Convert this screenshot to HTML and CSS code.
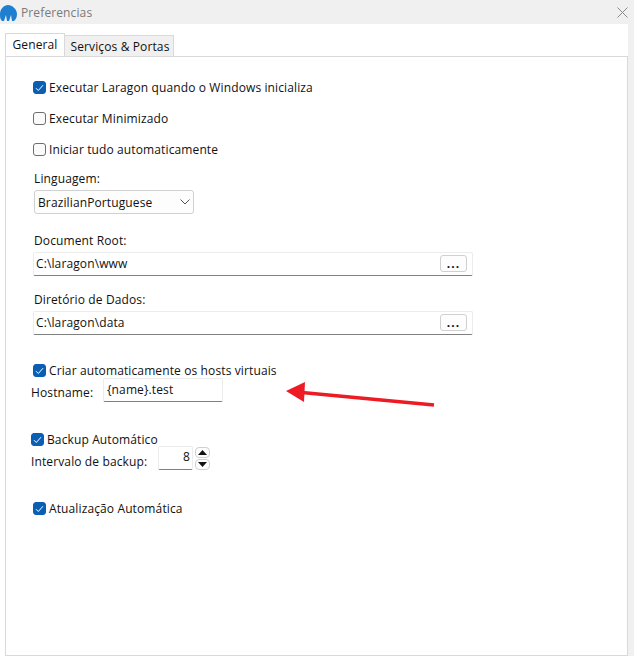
FILE: index.html
```html
<!DOCTYPE html>
<html lang="pt-BR">
<head>
  <meta charset="UTF-8" />
  <title>Preferencias</title>
  <link rel="stylesheet" href="styles.css">
</head>
<body>
  <div class="titlebar">
    <svg class="logo" width="17" height="18" viewBox="0 0 17 18">
      <path d="M8 1C12 1 17 5 17 10C17 13 16 15 14 17L12 17L11 11L9 17L7 17L6 11L4 17L2 17C0 15 0 13 0 10C0 5 4 1 8 1Z" fill="#1e7fd0"/>
    </svg>
    <span class="title">Preferencias</span>
    <svg class="close" width="11" height="11" viewBox="0 0 11 11">
      <path d="M0.5 0.5L10.5 10.5M10.5 0.5L0.5 10.5" stroke="#8a8a8a" stroke-width="1" fill="none"/>
    </svg>
  </div>

  <div class="window">
    <div class="tabs">
      <div class="tab active">General</div>
      <div class="tab">Serviços &amp; Portas</div>
    </div>

    <div class="panel">
      <!-- Startup options -->
      <label class="check first">
        <span class="box on"><svg width="9" height="8" viewBox="0 0 9 8"><path d="M1 4.2L3.3 6.5L8 1.2" stroke="#fff" stroke-width="1" fill="none"/></svg></span>
        Executar Laragon quando o Windows inicializa
      </label>
      <label class="check next">
        <span class="box"></span>
        Executar Minimizado
      </label>
      <label class="check next">
        <span class="box"></span>
        Iniciar tudo automaticamente
      </label>

      <div class="field-label lang-label">Linguagem:</div>
      <div class="select">
        <span>BrazilianPortuguese</span>
        <svg width="10" height="6" viewBox="0 0 10 6"><path d="M0.5 0.5L5 5L9.5 0.5" stroke="#555" stroke-width="1" fill="none"/></svg>
      </div>

      <div class="field-label root-label">Document Root:</div>
      <div class="path-input">
        <span>C:\laragon\www</span>
        <div class="dots">...</div>
      </div>

      <div class="field-label data-label">Diretório de Dados:</div>
      <div class="path-input">
        <span>C:\laragon\data</span>
        <div class="dots">...</div>
      </div>

      <!-- Virtual hosts -->
      <label class="check hosts">
        <span class="box on"><svg width="9" height="8" viewBox="0 0 9 8"><path d="M1 4.2L3.3 6.5L8 1.2" stroke="#fff" stroke-width="1" fill="none"/></svg></span>
        Criar automaticamente os hosts virtuais
      </label>
      <div class="host-row">
        <span class="host-label">Hostname:</span>
        <div class="host-input">{name}.test</div>
      </div>

      <!-- Backup -->
      <label class="check backup">
        <span class="box on"><svg width="9" height="8" viewBox="0 0 9 8"><path d="M1 4.2L3.3 6.5L8 1.2" stroke="#fff" stroke-width="1" fill="none"/></svg></span>
        Backup Automático
      </label>
      <div class="backup-row">
        <span class="backup-label">Intervalo de backup:</span>
        <div class="num-input">8</div>
        <div class="spin">
          <div class="spin-btn"><svg width="9" height="5" viewBox="0 0 9 5"><path d="M4.5 0L9 5L0 5Z" fill="#111"/></svg></div>
          <div class="spin-btn"><svg width="9" height="5" viewBox="0 0 9 5"><path d="M0 0L9 0L4.5 5Z" fill="#111"/></svg></div>
        </div>
      </div>

      <label class="check update">
        <span class="box on"><svg width="9" height="8" viewBox="0 0 9 8"><path d="M1 4.2L3.3 6.5L8 1.2" stroke="#fff" stroke-width="1" fill="none"/></svg></span>
        Atualização Automática
      </label>

      <!-- Annotation over the dialog -->
      <svg class="arrow" width="160" height="30" viewBox="0 0 160 30">
        <path d="M152 25L20 12.5" stroke="#ed1c24" stroke-width="3.5" fill="none"/>
        <path d="M4 11L23 2L22 22Z" fill="#ed1c24"/>
      </svg>
    </div>
  </div>
</body>
</html>
```

FILE: styles.css
```css
* {
  box-sizing: border-box;
}

body {
  margin: 0;
  background: #fff;
  font-family: "Open Sans", "Noto Sans", sans-serif;
  font-size: 12px;
  letter-spacing: 0.12px;
  color: #111;
}

.titlebar {
  height: 24px;
  background: #f0f0f0;
  display: flex;
  align-items: center;
  color: #7a7a7a;
}

.logo {
  margin-top: 1px;
}

.title {
  margin-left: 4px;
}

.close {
  margin-left: auto;
  margin-right: 6px;
  margin-top: 1px;
}

.window {
  height: 632px;
  padding: 8px 6px 0 5px;
  background: linear-gradient(to left, #f0f0f0 6px, #fff 6px);
}

.tabs {
  display: flex;
  align-items: flex-end;
  height: 24px;
}

.tab {
  height: 21px;
  width: 109px;
  padding-left: 2px;
  line-height: 21px;
  text-align: center;
  background: #f0f0f0;
  border: 1px solid #d9d9d9;
  border-bottom: none;
  border-left: none;
}

.tab.active {
  height: 24px;
  width: 60px;
  padding-left: 0;
  line-height: 22px;
  background: #fff;
  border-left: 1px solid #d9d9d9;
  margin-bottom: -1px;
  position: relative;
}

.panel {
  position: relative;
  height: 600px;
  background: #fff;
  border: 1px solid #d9d9d9;
  padding: 23px 0 0 27px;
}

.check {
  display: flex;
  align-items: center;
  gap: 3px;
  height: 15px;
}

.next {
  margin-top: 16px;
}

.box {
  width: 13px;
  height: 13px;
  border: 1px solid #6e6e6e;
  border-radius: 3px;
  background: #fafafa;
  display: flex;
  align-items: center;
  justify-content: center;
  flex-shrink: 0;
}

.box.on {
  background: #0a5fb4;
  border-color: #0a5fb4;
}

.field-label {
  height: 16px;
  line-height: 16px;
  padding-left: 1px;
}

.lang-label {
  margin-top: 14px;
}

.select {
  width: 160px;
  height: 24px;
  margin-left: 1px;
  margin-top: 3px;
  padding: 0 3px 0 3px;
  background: #fdfdfd;
  border: 1px solid #d0d0d0;
  border-radius: 3px;
  display: flex;
  align-items: center;
  justify-content: space-between;
}

.root-label {
  margin-top: 19px;
}

.data-label {
  margin-top: 16px;
}

.path-input {
  width: 440px;
  height: 24px;
  margin-top: 3px;
  padding: 0 5px 0 2px;
  background: #fff;
  border: 1px solid #ececec;
  border-bottom: 1px solid #808080;
  border-radius: 2px;
  display: flex;
  align-items: center;
  justify-content: space-between;
}

.path-input span {
  margin-bottom: 1px;
}

.dots {
  width: 27px;
  height: 17px;
  margin-bottom: 1px;
  background: #fdfdfd;
  border: 1px solid #d0d0d0;
  border-radius: 3px;
  text-align: center;
  line-height: 15px;
  font-weight: bold;
  letter-spacing: 1px;
}

.hosts {
  margin-top: 28px;
}

.host-row {
  display: flex;
  align-items: center;
  margin-left: -2px;
}

.host-label {
  width: 72px;
  padding-top: 5px;
}

.host-input {
  width: 120px;
  height: 24px;
  padding: 0 0 0 3px;
  line-height: 21px;
  border: 1px solid #ececec;
  border-bottom: 1px solid #808080;
  border-radius: 2px;
}

.backup {
  margin-top: 30px;
  margin-left: -2px;
}

.backup-row {
  display: flex;
  align-items: center;
  margin-left: -2px;
  margin-top: -1px;
}

.backup-label {
  width: 127px;
  padding-top: 6px;
}

.num-input {
  width: 35px;
  height: 24px;
  line-height: 20px;
  padding-right: 2px;
  text-align: right;
  border: 1px solid #ececec;
  border-bottom: 1px solid #808080;
  border-radius: 2px;
}

.spin {
  margin-left: 2px;
  display: flex;
  flex-direction: column;
  gap: 1px;
}

.spin-btn {
  width: 15px;
  height: 11px;
  background: #fdfdfd;
  border: 1px solid #d0d0d0;
  border-radius: 4px;
  display: flex;
  align-items: center;
  justify-content: center;
}

.update {
  margin-top: 31px;
}

.arrow {
  position: absolute;
  left: 276px;
  top: 323px;
}
```
